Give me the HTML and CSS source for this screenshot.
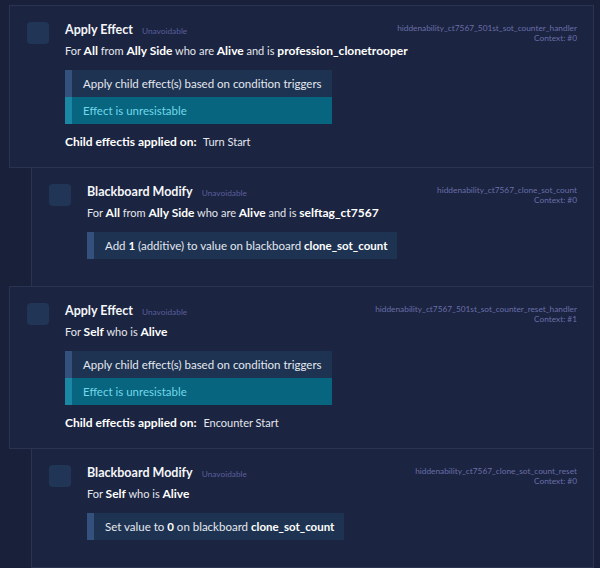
FILE: index.html
```html
<!DOCTYPE html>
<html>
<head>
<meta charset="utf-8">
<link rel="stylesheet" href="styles.css">
</head>
<body>
<div class="page">
  <div class="card">
    <div class="icon"></div>
    <div class="main">
      <div class="head">
        <div class="titlegroup"><span class="title">Apply Effect</span><span class="tag">Unavoidable</span></div>
        <div class="meta"><div>hiddenability_ct7567_501st_sot_counter_handler</div><div>Context: #0</div></div>
      </div>
      <div class="desc">For <b>All</b> from <b>Ally Side</b> who are <b>Alive</b> and is <b>profession_clonetrooper</b></div>
      <div class="box">
        <div class="row">Apply child effect(s) based on condition triggers</div>
        <div class="row teal">Effect is unresistable</div>
      </div>
      <div class="foot"><b>Child effectis applied on:</b> Turn Start</div>
    </div>
  </div>
  <div class="card nested">
    <div class="icon"></div>
    <div class="main">
      <div class="head">
        <div class="titlegroup"><span class="title">Blackboard Modify</span><span class="tag">Unavoidable</span></div>
        <div class="meta"><div>hiddenability_ct7567_clone_sot_count</div><div>Context: #0</div></div>
      </div>
      <div class="desc">For <b>All</b> from <b>Ally Side</b> who are <b>Alive</b> and is <b>selftag_ct7567</b></div>
      <div class="box">
        <div class="row">Add <b>1</b> (additive) to value on blackboard <b>clone_sot_count</b></div>
      </div>
    </div>
  </div>
  <div class="card">
    <div class="icon"></div>
    <div class="main">
      <div class="head">
        <div class="titlegroup"><span class="title">Apply Effect</span><span class="tag">Unavoidable</span></div>
        <div class="meta"><div>hiddenability_ct7567_501st_sot_counter_reset_handler</div><div>Context: #1</div></div>
      </div>
      <div class="desc">For <b>Self</b> who is <b>Alive</b></div>
      <div class="box">
        <div class="row">Apply child effect(s) based on condition triggers</div>
        <div class="row teal">Effect is unresistable</div>
      </div>
      <div class="foot"><b>Child effectis applied on:</b> Encounter Start</div>
    </div>
  </div>
  <div class="card nested">
    <div class="icon"></div>
    <div class="main">
      <div class="head">
        <div class="titlegroup"><span class="title">Blackboard Modify</span><span class="tag">Unavoidable</span></div>
        <div class="meta"><div>hiddenability_ct7567_clone_sot_count_reset</div><div>Context: #0</div></div>
      </div>
      <div class="desc">For <b>Self</b> who is <b>Alive</b></div>
      <div class="box">
        <div class="row">Set value to <b>0</b> on blackboard <b>clone_sot_count</b></div>
      </div>
    </div>
  </div>
</div>
</body>
</html>
```
FILE: styles.css
```css
html, body {
  margin: 0;
  padding: 0;
  background: #18203a;
  height: 100%;
  overflow: hidden;
}
body {
  font-family: Lato, "Liberation Sans", sans-serif;
  color: #e4e7ee;
}
.page {
  padding: 5px 6px 0 9px;
}
.card {
  display: flex;
  background: #1b2440;
  border: 1px solid #2a3450;
  margin-top: -1px;
  padding: 16px 16px 18px 17px;
}
.card:first-child { margin-top: 0; }
.nested {
  margin-left: 22px;
  padding-bottom: 27px;
}
.icon {
  width: 22px;
  height: 22px;
  border-radius: 4px;
  background: #213657;
  flex: none;
  margin-right: 16px;
}
.main {
  flex: 1;
  display: flex;
  flex-direction: column;
  align-items: flex-start;
}
.head {
  display: flex;
  align-items: flex-start;
  align-self: stretch;
  height: 20px;
}
.titlegroup {
  display: flex;
  align-items: baseline;
  gap: 9px;
  line-height: 16px;
}
.title {
  font-weight: 700;
  font-size: 12.5px;
  color: #f4f6fa;
}
.tag {
  font-size: 8.3px;
  color: #5a5e9c;
}
.meta {
  margin-left: auto;
  text-align: right;
  font-size: 8.3px;
  line-height: 10px;
  color: #6a6ea8;
  margin-top: 1px;
}
.desc, .foot {
  font-size: 11px;
  line-height: 14px;
  height: 14px;
  white-space: nowrap;
}
.desc { margin-top: 2px; }
.desc b, .foot b {
  font-weight: 700;
  font-size: 12px;
  color: #fff;
}
.box {
  margin-top: 12px;
  display: flex;
  flex-direction: column;
}
.row {
  font-size: 11.5px;
  padding: 0 10px 0 11px;
  height: 27px;
  line-height: 27px;
  background: #1e3351;
  border-left: 7px solid #34517d;
  color: #e4e8f0;
  white-space: nowrap;
}
.row b {
  font-weight: 700;
  color: #fff;
}
.row.teal {
  background: #07657f;
  color: #72d8ea;
  border-left-color: #1a88a4;
}
.foot { margin-top: 11px; }
.foot b { margin-right: 4px; }
```
